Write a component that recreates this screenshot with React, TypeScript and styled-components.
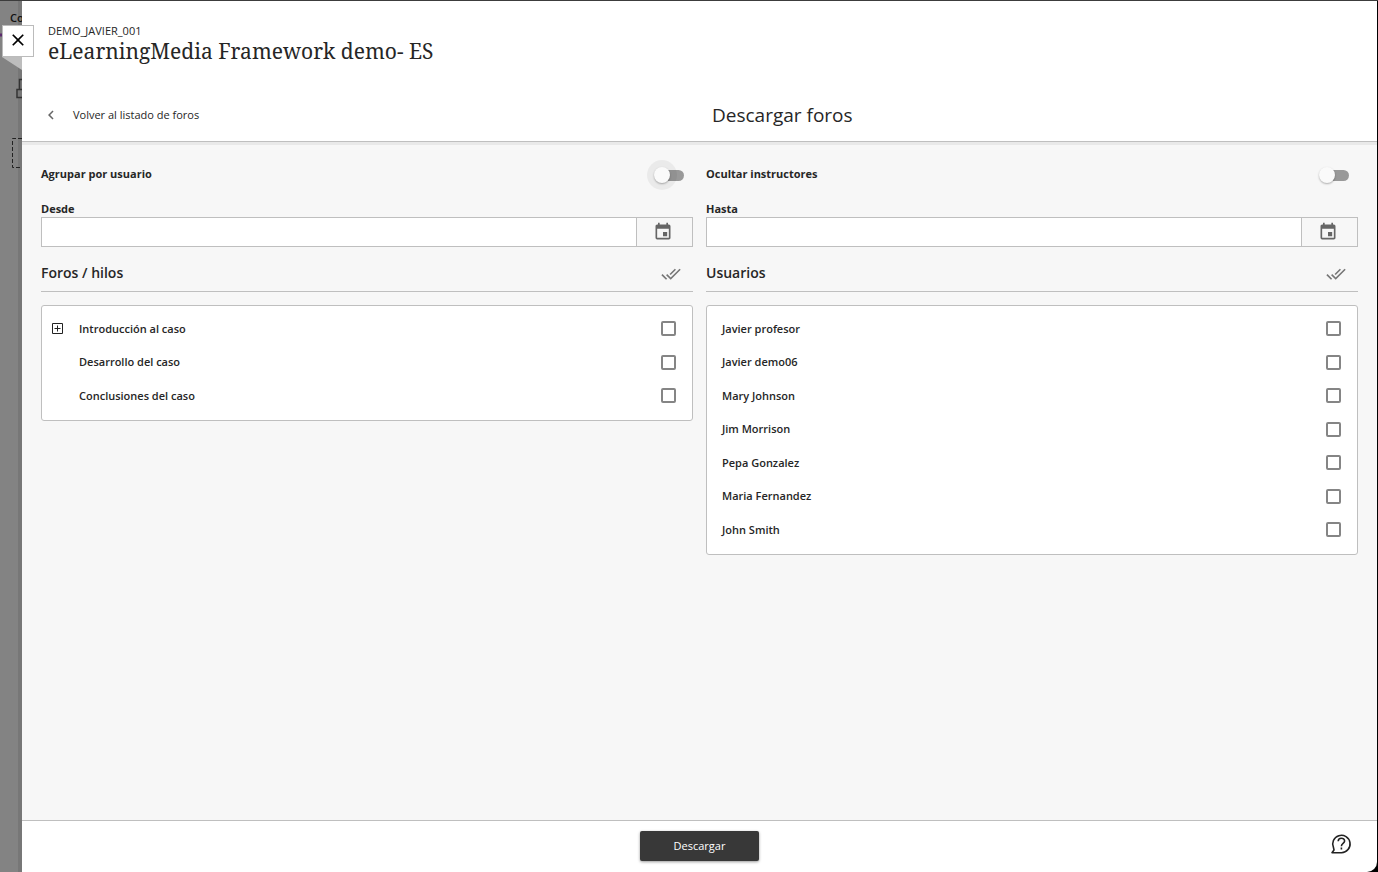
import React from "react";
import styled, { createGlobalStyle } from "styled-components";
import { MdChevronLeft, MdClose, MdDoneAll, MdEvent } from "react-icons/md";

const GlobalStyle = createGlobalStyle`
  *, *::before, *::after { box-sizing: border-box; }
  body {
    margin: 0;
    background: #000;
    color: #262626;
    font: 11px/16px "Open Sans", "Noto Sans", sans-serif;
  }
  button, input { font: inherit; color: inherit; margin: 0; }
  h1, h2, h3, p, ul { margin: 0; padding: 0; }
`;

const Screen = styled.div`
  display: flex;
  min-height: 100vh;
  padding-right: 1px;
  border-top: 1px solid #3c3c3c;
`;

const Backdrop = styled.div`
  position: relative;
  flex: 0 0 22px;
  overflow: hidden;
  background: linear-gradient(90deg, #838383 18px, #777 18px);
`;

const BackdropText = styled.span`
  display: block;
  padding: 9px 0 0 10px;
  color: #111;
  font-weight: 600;
`;

const BackdropArt = styled.svg`
  position: absolute;
  top: 0;
  left: 0;
`;

const Panel = styled.main`
  position: relative;
  flex: 1;
  min-width: 0;
  display: flex;
  flex-direction: column;
  background: #fff;
  border-bottom-right-radius: 10px;
`;

const CloseButton = styled.button`
  position: absolute;
  top: 24px;
  left: -20px;
  width: 32px;
  height: 32px;
  padding: 0 0 2px;
  display: grid;
  place-items: center;
  color: #000;
  background: #fff;
  border: 1px solid #bbb;
`;

const Header = styled.header`
  padding: 22px 26px 15px;
  border-bottom: 1px solid #bfbfbf;
`;

const CourseTitle = styled.h1`
  font: 400 21px/24px "Noto Serif", "DejaVu Serif Condensed", "DejaVu Serif", serif;
`;

const HeaderNav = styled.div`
  display: grid;
  grid-template-columns: 1fr 1fr;
  column-gap: 25px;
  align-items: center;
  margin-top: 41px;
`;

const BackLink = styled.a`
  display: flex;
  align-items: center;
  gap: 13px;
  margin-left: -6px;
  color: inherit;
  text-decoration: none;
  svg { color: #666; }
`;

const PageTitle = styled.h2`
  font-size: 19px;
  line-height: 22px;
  font-weight: 400;
`;

const Content = styled.form`
  flex: 1;
  display: grid;
  grid-template-columns: 1fr 1fr;
  column-gap: 13px;
  align-items: start;
  padding: 14px 19px;
  background: #f7f7f7;
  border-top: 3px solid #e9e9e9;
`;

const ToggleRow = styled.label`
  display: flex;
  align-items: center;
  justify-content: space-between;
  height: 30px;
  padding-right: 9px;
  font-weight: 700;
`;

const Switch = styled.input<{ $focused?: boolean }>`
  appearance: none;
  position: relative;
  width: 28px;
  height: 11px;
  border-radius: 6px;
  background: #999;
  && { margin-top: 2px; }
  &::before {
    content: "";
    position: absolute;
    top: -3px;
    left: -2px;
    width: 16px;
    height: 16px;
    border-radius: 50%;
    background: #fafafa;
    box-shadow: 0 1px 2px rgba(0, 0, 0, 0.3)${(p) => (p.$focused ? ", 0 0 0 7px rgba(0, 0, 0, 0.05)" : "")};
  }
`;

const DateLabel = styled.label`
  display: block;
  margin-top: 12px;
  font-weight: 700;
`;

const DateField = styled.div`
  display: flex;
  height: 30px;
  border: 1px solid #bfbfbf;
`;

const DateInput = styled.input`
  flex: 1;
  min-width: 0;
  padding: 0 8px;
  border: 0;
  background: #fff;
`;

const DateButton = styled.button`
  width: 56px;
  padding: 0 4px 0 0;
  display: grid;
  place-items: center;
  color: #666;
  background: #f7f7f7;
  border: 0;
  border-left: 1px solid #bfbfbf;
`;

const SectionHead = styled.div`
  display: flex;
  align-items: center;
  justify-content: space-between;
  height: 45px;
  padding: 8px 12px 0 0;
  border-bottom: 1px solid #bfbfbf;
`;

const SectionTitle = styled.h3`
  font-size: 14px;
  line-height: 20px;
  font-weight: 600;
`;

const SelectAll = styled.button`
  display: grid;
  padding: 2px 0 0;
  color: #777;
  background: none;
  border: 0;
`;

const List = styled.ul`
  margin-top: 13px;
  padding: 6px 16px 8px 10px;
  list-style: none;
  background: #fff;
  border: 1px solid #bfbfbf;
  border-radius: 3px;
`;

const Item = styled.li`
  display: flex;
  align-items: center;
  height: 33px;
  &:nth-child(even) { height: 34px; }
`;

const Expander = styled.button`
  width: 11px;
  height: 11px;
  padding: 0;
  display: grid;
  color: #222;
  background: none;
  border: 0;
`;

const ItemLabel = styled.label<{ $indent: number }>`
  flex: 1;
  display: flex;
  align-items: center;
  justify-content: space-between;
  padding-left: ${(p) => p.$indent}px;
  font-weight: 600;
`;

const Check = styled.input`
  appearance: none;
  width: 15px;
  height: 15px;
  border: 2px solid #858585;
  border-radius: 2px;
  background: #fff;
`;

const Footer = styled.footer`
  display: grid;
  grid-template-columns: 1fr auto 1fr;
  align-items: center;
  padding: 10px 25px 11px;
  border-top: 1px solid #bfbfbf;
`;

const DownloadButton = styled.button`
  grid-column: 2;
  width: 119px;
  height: 30px;
  padding: 0;
  color: #fff;
  background: #383838;
  border: 0;
  border-radius: 2px;
  box-shadow: 0 1px 3px rgba(0, 0, 0, 0.4);
`;

const HelpButton = styled.button`
  justify-self: end;
  display: grid;
  padding: 0 0 4px;
  background: none;
  border: 0;
`;

type Entry = { name: string; expandable?: boolean };

type ColumnProps = {
  id: string;
  toggle: string;
  focused?: boolean;
  date: string;
  title: string;
  tree?: boolean;
  entries: Entry[];
};

const forums: Entry[] = [
  { name: "Introducción al caso", expandable: true },
  { name: "Desarrollo del caso" },
  { name: "Conclusiones del caso" },
];

const users: Entry[] = [
  "Javier profesor",
  "Javier demo06",
  "Mary Johnson",
  "Jim Morrison",
  "Pepa Gonzalez",
  "Maria Fernandez",
  "John Smith",
].map((name) => ({ name }));

function Column({ id, toggle, focused, date, title, tree, entries }: ColumnProps) {
  return (
    <section>
      <ToggleRow>
        {toggle}
        <Switch type="checkbox" role="switch" $focused={focused} />
      </ToggleRow>
      <DateLabel htmlFor={id}>{date}</DateLabel>
      <DateField>
        <DateInput id={id} type="text" />
        <DateButton type="button" aria-label="Calendario">
          <MdEvent size={20} />
        </DateButton>
      </DateField>
      <SectionHead>
        <SectionTitle>{title}</SectionTitle>
        <SelectAll type="button" aria-label="Seleccionar todos">
          <MdDoneAll size={20} />
        </SelectAll>
      </SectionHead>
      <List>
        {entries.map((entry) => (
          <Item key={entry.name}>
            {entry.expandable && (
              <Expander type="button" aria-label="Desplegar">
                <svg width="11" height="11" viewBox="0 0 11 11" fill="none" stroke="currentColor">
                  <path d="M.5.5h10v10H.5zM2.5 5.5h6M5.5 2.5v6" />
                </svg>
              </Expander>
            )}
            <ItemLabel $indent={entry.expandable ? 16 : tree ? 27 : 5}>
              {entry.name}
              <Check type="checkbox" />
            </ItemLabel>
          </Item>
        ))}
      </List>
    </section>
  );
}

export default function App() {
  return (
    <>
      <GlobalStyle />
      <Screen>
        <Backdrop aria-hidden="true">
          <BackdropText>Co</BackdropText>
          <BackdropArt width="22" height="180" viewBox="0 1 22 180" fill="none">
            <path d="M0 35h2" stroke="#5c2a6e" strokeWidth="3" />
            <path d="M2 57h20v13z" fill="#bdbdbd" />
            <path d="M23 79.500h-3.500v10M23 89.500h-6v8h6" stroke="#333" strokeWidth="1.500" />
            <path d="M22 138.500h-9.500v29H22" stroke="#222" strokeDasharray="4 2" />
          </BackdropArt>
        </Backdrop>
        <Panel>
          <CloseButton type="button" aria-label="Cerrar">
            <MdClose size={20} />
          </CloseButton>
          <Header>
            <p>DEMO_JAVIER_001</p>
            <CourseTitle>eLearningMedia Framework demo- ES</CourseTitle>
            <HeaderNav>
              <BackLink href="#foros">
                <MdChevronLeft size={18} />
                Volver al listado de foros
              </BackLink>
              <PageTitle>Descargar foros</PageTitle>
            </HeaderNav>
          </Header>
          <Content id="descarga">
            <Column
              id="desde"
              toggle="Agrupar por usuario"
              focused
              date="Desde"
              title="Foros / hilos"
              tree
              entries={forums}
            />
            <Column
              id="hasta"
              toggle="Ocultar instructores"
              date="Hasta"
              title="Usuarios"
              entries={users}
            />
          </Content>
          <Footer>
            <DownloadButton type="submit" form="descarga">
              Descargar
            </DownloadButton>
            <HelpButton type="button" aria-label="Ayuda">
              <svg width="22" height="22" viewBox="0 0 22 22" fill="none" stroke="#222" strokeWidth="1.600">
                <path d="M2 19.700h9.500a8.700 8.700 0 1 0-8-5L4 17z" strokeLinejoin="round" />
                <path d="M8.200 8.300c0-4.200 6.400-4 6.400-.3 0 2.500-3.200 2.400-3.200 5.200" />
                <path d="M11.400 14.500v2" />
              </svg>
            </HelpButton>
          </Footer>
        </Panel>
      </Screen>
    </>
  );
}
